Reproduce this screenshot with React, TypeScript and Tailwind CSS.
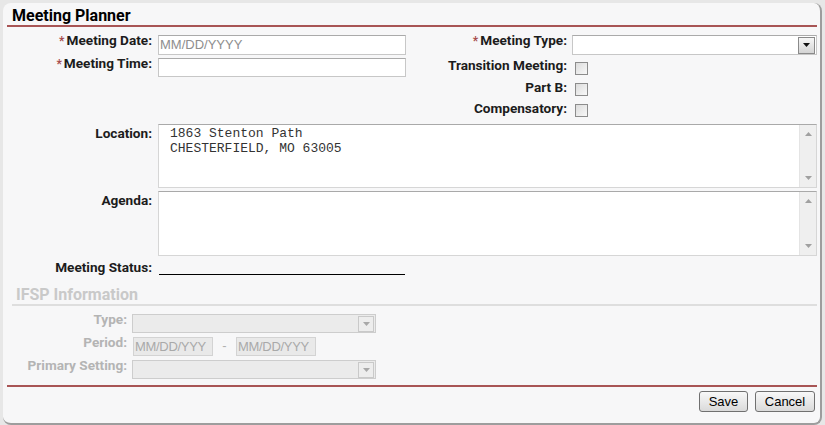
import React from "react";

const lbl = "font-['Roboto',sans-serif] font-bold text-[13.6px] leading-[15px] text-[#1c1c1c] text-right";
const dim = "font-['Roboto',sans-serif] font-bold text-[13.6px] leading-[15px] text-[#b4b4b4] text-right";

function Req() {
  return <span className="text-[#a64b4b] text-[12px] mr-[2px]">*</span>;
}

function Arrow({ off }: { off?: boolean }) {
  return (
    <div
      className={
        off
          ? "w-[16px] h-[16px] mr-[1px] flex items-center justify-center border border-[#c9c9c9] bg-[#ededed]"
          : "w-[17px] h-[17px] mr-[1px] flex items-center justify-center border border-[#8a8a8a] bg-gradient-to-b from-[#f7f7f7] to-[#d4d4d4]"
      }
    >
      <svg width="7" height="4" viewBox="0 0 7 4">
        <path d="M0 0h7L3.5 4z" fill={off ? "#a8a8a8" : "#111"} />
      </svg>
    </div>
  );
}

function Scroll() {
  return (
    <div className="w-[17px] h-full bg-[#efefef] border-l border-[#e4e4e4] flex flex-col justify-between items-center py-[7px]">
      <svg width="7" height="4" viewBox="0 0 7 4">
        <path d="M0 4h7L3.5 0z" fill="#a0a0a0" />
      </svg>
      <svg width="7" height="4" viewBox="0 0 7 4">
        <path d="M0 0h7L3.5 4z" fill="#a0a0a0" />
      </svg>
    </div>
  );
}

function Check() {
  return (
    <div className="w-[13px] h-[13px] mt-[5px] ml-[8px] border border-[#8c8c8c] bg-gradient-to-br from-[#dcdcdc] to-[#f8f8f8]" />
  );
}

function Area({ lines }: { lines?: string[] }) {
  return (
    <div className="ml-[6px] w-[659px] h-full bg-white border border-[#d6d6d6] border-t-[#a9a9a9] flex">
      <div className="flex-1 pl-[11px] pt-[1px] font-['Liberation_Mono',monospace] text-[13px] leading-[15px] text-[#333]">
        {lines?.map((l) => (
          <div key={l}>{l}</div>
        ))}
      </div>
      <Scroll />
    </div>
  );
}

export default function App() {
  return (
    <div className="w-[825px] h-[425px] bg-[#e7e7e7] pt-[3px] pl-[3px] font-['Liberation_Sans',sans-serif]">
      <div className="w-[819px] h-[422px] bg-[#f7f7f8] rounded-[8px] border-r-2 border-b-2 border-[#9d9d9d] pl-[4px] pr-[3px] flex flex-col">
        {/* header */}
        <div className="h-[24px] pt-[3px] pl-[5px] border-b-2 border-[#a85555] font-['Roboto',sans-serif] font-bold text-[16px] leading-[19px] text-black">
          Meeting Planner
        </div>

        {/* top fields */}
        <div className="flex mt-[8px]">
          <div className="w-[399px] flex flex-col">
            <div className="flex items-start h-[20px]">
              <div className={lbl + " w-[145px] -mt-[2px]"}>
                <Req />
                Meeting Date:
              </div>
              <div className="ml-[6px] w-[248px] h-[20px] bg-white border border-[#c7c7c7] border-t-[#aaaaaa] flex items-center pl-[1px] text-[13px] text-[#8e8e8e]">
                MM/DD/YYYY
              </div>
            </div>
            <div className="flex items-start h-[19px] mt-[3px]">
              <div className={lbl + " w-[145px] -mt-[2px]"}>
                <Req />
                Meeting Time:
              </div>
              <div className="ml-[6px] w-[248px] h-[19px] bg-white border border-[#c7c7c7] border-t-[#aaaaaa]" />
            </div>
          </div>
          <div className="flex-1 flex flex-col">
            <div className="flex items-start h-[20px]">
              <div className={lbl + " w-[161px] -mt-[2px]"}>
                <Req />
                Meeting Type:
              </div>
              <div className="ml-[5px] w-[245px] h-[20px] bg-white border border-[#c7c7c7] border-t-[#aaaaaa] flex items-center justify-end">
                <Arrow />
              </div>
            </div>
            <div className="mt-[2px] flex items-start h-[21px]">
              <div className={lbl + " w-[161px] mt-[1px]"}>Transition Meeting:</div>
              <Check />
            </div>
            <div className="flex items-start h-[21px]">
              <div className={lbl + " w-[161px] mt-[2px]"}>Part B:</div>
              <Check />
            </div>
            <div className="flex items-start h-[21px]">
              <div className={lbl + " w-[161px] mt-[2px]"}>Compensatory:</div>
              <Check />
            </div>
          </div>
        </div>

        {/* location / agenda */}
        <div className="flex items-start h-[64px] mt-[4px]">
          <div className={lbl + " w-[145px] pt-[2px]"}>Location:</div>
          <Area lines={["1863 Stenton Path", "CHESTERFIELD, MO 63005"]} />
        </div>
        <div className="flex items-start h-[65px] mt-[3px]">
          <div className={lbl + " w-[145px] pt-[2px]"}>Agenda:</div>
          <Area />
        </div>

        {/* status */}
        <div className="flex items-start mt-[4px]">
          <div className={lbl + " w-[145px]"}>Meeting Status:</div>
          <div className="ml-[7px] w-[246px] h-[15px] border-b border-black" />
        </div>

        {/* IFSP */}
        <div className="mt-[11px] ml-[5px] h-[20px] pl-[4px] border-b-2 border-[#dedede] font-['Roboto',sans-serif] font-bold text-[16px] leading-[18px] text-[#c9c9c9]">
          IFSP Information
        </div>
        <div className="flex items-start h-[19px] mt-[8px]">
          <div className={dim + " w-[120px] -mt-[2px]"}>Type:</div>
          <div className="ml-[5px] w-[244px] h-[19px] bg-[#ebebeb] border border-[#cdcdcd] flex items-center justify-end">
            <Arrow off />
          </div>
        </div>
        <div className="flex items-start h-[19px] mt-[4px]">
          <div className={dim + " w-[120px] -mt-[2px]"}>Period:</div>
          <div className="ml-[6px] w-[80px] h-[19px] bg-[#e9e9e9] border border-[#d3d3d3] flex items-center px-[1px] overflow-hidden text-[13px] text-[#a9a9a9] tracking-[-0.3px]">
            MM/DD/YYY
          </div>
          <div className="w-[23px] text-center text-[13px] leading-[18px] text-[#b0b0b0]">-</div>
          <div className="w-[80px] h-[19px] bg-[#e9e9e9] border border-[#d3d3d3] flex items-center px-[1px] overflow-hidden text-[13px] text-[#a9a9a9] tracking-[-0.3px]">
            MM/DD/YYY
          </div>
        </div>
        <div className="flex items-start h-[19px] mt-[4px]">
          <div className={dim + " w-[120px] -mt-[2px]"}>Primary Setting:</div>
          <div className="ml-[5px] w-[244px] h-[19px] bg-[#ebebeb] border border-[#cdcdcd] flex items-center justify-end">
            <Arrow off />
          </div>
        </div>

        <div className="mt-[6px] h-[2px] bg-[#a85555]" />

        {/* buttons */}
        <div className="mt-[4px] flex justify-end gap-[7px] pr-[2px]">
          <button className="w-[49px] h-[21px] rounded-[3px] border border-[#707070] bg-gradient-to-b from-[#f8f8f8] to-[#dadada] text-[13px] text-black">
            Save
          </button>
          <button className="w-[60px] h-[21px] rounded-[3px] border border-[#707070] bg-gradient-to-b from-[#f8f8f8] to-[#dadada] text-[13px] text-black">
            Cancel
          </button>
        </div>
      </div>
    </div>
  );
}
